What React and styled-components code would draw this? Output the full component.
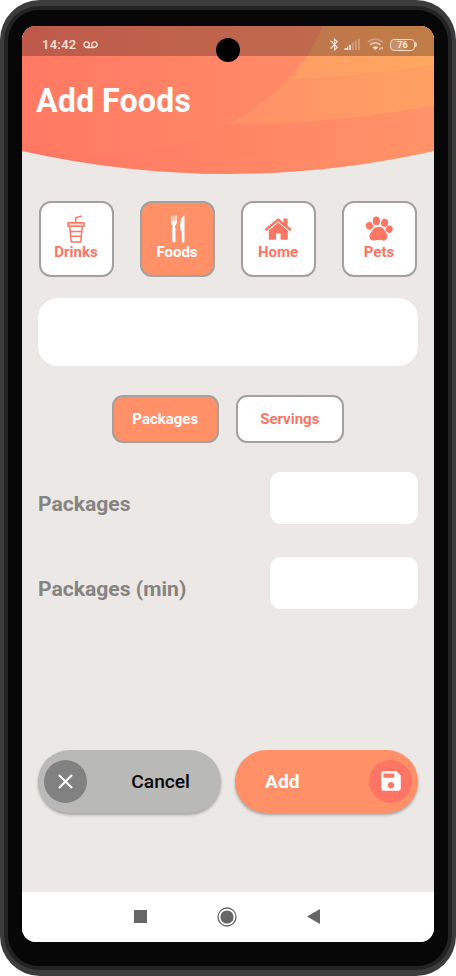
import React from "react";
import styled, { createGlobalStyle } from "styled-components";
import { MdSave, MdClose, MdBluetooth } from "react-icons/md";

const GlobalStyle = createGlobalStyle`
  * { box-sizing: border-box; }
  body { margin: 0; background: #fff; font-family: Roboto, sans-serif; }
  button, input { font-family: inherit; margin: 0; }
`;

const PhoneShell = styled.div`
  width: 456px;
  height: 976px;
  padding: 6px 4px;
  border-radius: 40px;
  background: #3c3c3c;
`;
const PhoneRim = styled.div`
  height: 100%;
  padding: 4px;
  border-radius: 35px;
  background: #232323;
`;
const PhoneBezel = styled.div`
  height: 100%;
  padding: 16px 14px 24px;
  border-radius: 31px;
  background: #070707;
`;
const Screen = styled.div`
  position: relative;
  display: flex;
  flex-direction: column;
  height: 916px;
  overflow: hidden;
  border-radius: 14px;
  background: #ece8e5;
`;
const Camera = styled.div`
  position: absolute;
  top: 12px;
  left: 194px;
  width: 24px;
  height: 24px;
  border-radius: 50%;
  background: #000;
`;
const Header = styled.header`
  position: relative;
  flex: none;
  height: 149px;
`;
const HeaderArt = styled.svg`
  position: absolute;
  inset: 0;
  display: block;
`;
const StatusBar = styled.div`
  position: relative;
  display: flex;
  align-items: center;
  justify-content: space-between;
  height: 30px;
  padding: 7px 17px 0 20px;
  background: rgba(0, 0, 0, 0.25);
`;
const StatusGroup = styled.div`
  display: flex;
  align-items: center;
  gap: ${(p) => p.$gap}px;
  color: #f3ddd3;
`;
const Clock = styled.span`
  font-size: 13px;
  font-weight: 600;
  line-height: 16px;
  letter-spacing: 0.25px;
`;
const Battery = styled.span`
  display: flex;
  align-items: center;
  &::after {
    content: "";
    width: 2px;
    height: 5px;
    border-radius: 0 2px 2px 0;
    background: #f0cdb2;
  }
`;
const BatteryLevel = styled.span`
  width: 25px;
  height: 12px;
  border: 1.8px solid #f3d9c6;
  border-radius: 4px;
  background: linear-gradient(90deg, #c99068 40%, transparent 76%);
  color: #fbeadd;
  font-size: 9px;
  font-weight: 700;
  line-height: 10px;
  text-align: center;
`;
const Title = styled.h1`
  position: relative;
  margin: 25px 0 0 14px;
  color: #fff;
  font-size: 32.3px;
  font-weight: 700;
  line-height: 40px;
`;
const Content = styled.main`
  display: flex;
  flex: 1;
  flex-direction: column;
  padding: 26px 16px 0;
`;
const CategoryRow = styled.div`
  display: flex;
  justify-content: space-between;
  padding: 0 1px 0 1px;
`;
const CategoryButton = styled.button`
  display: flex;
  flex-direction: column;
  align-items: center;
  width: 75px;
  height: 76px;
  padding: 11px 1px 0 0;
  border: 2px solid #a3a09d;
  border-radius: 12px;
  background: ${(p) => (p.$active ? "#ff9068" : "#fff")};
  color: ${(p) => (p.$active ? "#fff" : "#fd7563")};
  font-size: 15px;
  font-weight: 700;
  line-height: 18px;
`;
const CategoryIcon = styled.span`
  display: flex;
  align-items: center;
  justify-content: center;
  height: 29px;
`;
const NameInput = styled.input`
  height: 68px;
  margin-top: 21px;
  padding: 0 18px;
  border: 0;
  border-radius: 20px;
  background: #fff;
  font-size: 20px;
`;
const UnitRow = styled.div`
  display: flex;
  justify-content: center;
  gap: 17px;
  padding-right: 1px;
  margin-top: 29px;
`;
const UnitButton = styled.button`
  width: 107.5px;
  height: 47.5px;
  padding: 0;
  border: 2px solid #a3a09d;
  border-radius: 11px;
  background: ${(p) => (p.$active ? "#ff9068" : "#fff")};
  color: ${(p) => (p.$active ? "#fff" : "#f77566")};
  font-size: 15px;
  font-weight: 700;
`;
const FieldRow = styled.label`
  display: flex;
  align-items: flex-start;
  justify-content: space-between;
  margin-top: ${(p) => p.$top}px;
  color: #868482;
  font-size: 21.1px;
  font-weight: 700;
  line-height: 64px;
  height: 52px;
`;
const AmountInput = styled.input`
  width: 148px;
  height: 52px;
  padding: 0 14px;
  border: 0;
  border-radius: 11px;
  background: #fff;
  font-size: 18px;
`;
const ActionRow = styled.div`
  display: flex;
  justify-content: space-between;
  margin-top: 141px;
`;
const ActionButton = styled.button`
  display: flex;
  align-items: center;
  justify-content: space-between;
  width: 183px;
  height: 63px;
  padding: ${(p) => (p.$primary ? "0 6px 0 30px" : "0 31px 0 6px")};
  border: 0;
  border-radius: 32px;
  background: ${(p) => (p.$primary ? "#ff9068" : "#b9b9b8")};
  box-shadow: 0 2px 3px rgba(0, 0, 0, 0.3);
  color: ${(p) => (p.$primary ? "#fff" : "#050505")};
  font-size: ${(p) => (p.$primary ? 19.2 : 19.2)}px;
  font-weight: ${(p) => (p.$primary ? 700 : 500)};
`;
const ActionBadge = styled.span`
  display: flex;
  align-items: center;
  justify-content: center;
  width: 43px;
  height: 43px;
  border-radius: 50%;
  background: ${(p) => (p.$primary ? "#fe7563" : "#818181")};
  color: #fff;
`;
const NavBar = styled.nav`
  display: flex;
  flex: none;
  align-items: center;
  justify-content: center;
  gap: 70px;
  height: 50px;
  padding: 0 2px 1px 0;
  background: #fff;
`;

const VoicemailIcon = () => (
  <svg width="15" height="8" viewBox="0 0 15 8" fill="none" stroke="currentColor" strokeWidth="1.4">
    <circle cx="3.6" cy="3.6" r="2.7" />
    <circle cx="11.4" cy="3.6" r="2.7" />
    <path d="M3.6 6.5H11.4" />
  </svg>
);

const SignalIcon = () => (
  <svg width="17" height="13" viewBox="0 0 17 13" fill="currentColor">
    <rect x="0.5" y="10" width="3" height="2" />
    <rect x="3" y="8.6" width="1.3" height="3.4" />
    <rect x="5.2" y="6.8" width="1.8" height="5.2" />
    <g opacity="0.35">
      <rect x="8.1" y="4.4" width="1.7" height="7.6" />
      <rect x="11" y="2.6" width="1.8" height="9.4" />
      <rect x="14" y="0.8" width="1.8" height="11.2" />
    </g>
  </svg>
);

const WifiIcon = () => (
  <svg width="17" height="13" viewBox="0 0 17 13" fill="none" stroke="currentColor" strokeWidth="1.6">
    <path d="M0.8 4.2Q8.3 -2 15.8 4.2" opacity="0.4" />
    <path d="M3 7Q8.3 2.6 13.6 7" opacity="0.8" />
    <path d="M5.3 9.4Q8.3 7.2 11.3 9.4L8.3 12Z" fill="currentColor" stroke="none" />
    <path d="M13 12V10.4L15.5 9.6V11.4" strokeWidth="1.2" opacity="0.7" />
  </svg>
);

const DrinkIcon = () => (
  <svg width="18" height="28" viewBox="0 0 18 28" fill="none" stroke="currentColor" strokeWidth="1.5" strokeLinejoin="round">
    <path d="M8.7 7.5V2.7L15 0.9" />
    <path d="M1 7.7H17V11.3H1Z" fill="#f3dcd0" />
    <path d="M2.7 11.5L4.3 27H13.7L15.3 11.5M3.2 16.5H14.8M3.8 21.2H14.2" />
  </svg>
);

const CutleryIcon = () => (
  <svg width="18" height="28" viewBox="-2.5 0 18 28" fill="currentColor">
    <path d="M1.1 1V7.3M3.3 1V7.3M5.5 1V7.3" fill="none" stroke="currentColor" strokeWidth="1.3" strokeLinecap="round" />
    <path d="M0.5 6.5H6.2C6.2 9.2 5.3 10.2 4.5 10.7V12L5 13V26C5 28 1.8 28 1.8 26V13L2.3 12V10.7C1.3 10.2 0.5 9.2 0.5 6.5Z" />
    <path d="M14 0.6V26.2C14 28 11.3 28 11.3 26.2V16.5C10.2 16 9.7 14.5 9.7 12C9.7 6 11 1.5 14 0.6Z" />
  </svg>
);

const HomeIcon = () => (
  <svg width="28" height="22" viewBox="0 0 28 22" fill="currentColor">
    <path d="M2.3 11.5L14.2 1.8L26.1 11.5" fill="none" stroke="currentColor" strokeWidth="2.6" strokeLinecap="round" strokeLinejoin="round" />
    <path d="M19.5 0.6H23.6V8.4L19.5 5Z" />
    <path d="M4.8 12.4L14.2 4.6L23.8 12.4V21.8H16.6V15.4H12V21.8H4.8Z" />
  </svg>
);

const PawIcon = () => (
  <svg width="28" height="25" viewBox="0 0 28 25" fill="currentColor">
    <ellipse cx="4.4" cy="9.8" rx="3.5" ry="3.9" transform="rotate(-20 4.4 9.8)" />
    <ellipse cx="11.4" cy="4.9" rx="3.6" ry="4.4" />
    <ellipse cx="19.6" cy="6.8" rx="3.5" ry="4.1" transform="rotate(12 19.6 6.8)" />
    <ellipse cx="24.2" cy="13.2" rx="3.4" ry="3.7" transform="rotate(25 24.2 13.2)" />
    <path d="M13.6 10.8C18 10.8 19.4 14.2 21.4 17.2C24 21.2 21.4 25 17.8 24.4C14.8 23.9 12.6 23.8 9.6 24.4C5.4 25.2 3.1 21.8 5.2 18C7.2 14.8 9 10.8 13.6 10.8Z" />
  </svg>
);

const categories = [
  { label: "Drinks", icon: <DrinkIcon /> },
  { label: "Foods", icon: <CutleryIcon />, active: true },
  { label: "Home", icon: <HomeIcon /> },
  { label: "Pets", icon: <PawIcon /> },
];

export default function App() {
  return (
    <>
      <GlobalStyle />
      <PhoneShell>
        <PhoneRim>
          <PhoneBezel>
            <Screen>
              <Header>
                <HeaderArt width="412" height="149" viewBox="0 0 412 149">
                  <defs>
                    <linearGradient id="base" x1="0" x2="1">
                      <stop offset="0" stopColor="#ff7663" />
                      <stop offset="1" stopColor="#ff9368" />
                    </linearGradient>
                    <linearGradient id="disc" x1="0" x2="1">
                      <stop offset="0" stopColor="#ff7863" />
                      <stop offset="1" stopColor="#ff8d68" />
                    </linearGradient>
                    <linearGradient id="band" x1="0" x2="1">
                      <stop offset="0" stopColor="#ff9068" />
                      <stop offset="1" stopColor="#ffa063" />
                    </linearGradient>
                    <linearGradient id="glow" x1="0" x2="1">
                      <stop offset="0" stopColor="#ff9e66" />
                      <stop offset="1" stopColor="#ffa75e" />
                    </linearGradient>
                  </defs>
                  <path fill="url(#base)" d="M0 0H412V125Q206 171 0 125Z" />
                  <path fill="url(#disc)" d="M0 0H301Q272 64 206 98Q140 132 60 130L0 120Z" />
                  <path fill="url(#band)" d="M301 0Q272 64 206 98Q320 98 412 79V0Z" />
                  <path fill="url(#glow)" d="M301 0Q289 30 270 53Q345 50 412 39V0Z" />
                </HeaderArt>
                <StatusBar>
                  <StatusGroup $gap={6}>
                    <Clock>14:42</Clock>
                    <VoicemailIcon />
                  </StatusGroup>
                  <StatusGroup $gap={6}>
                    <StatusGroup $gap={2}>
                      <MdBluetooth size={15} />
                      <SignalIcon />
                    </StatusGroup>
                    <WifiIcon />
                    <Battery>
                      <BatteryLevel>76</BatteryLevel>
                    </Battery>
                  </StatusGroup>
                </StatusBar>
                <Title>Add Foods</Title>
              </Header>
              <Content>
                <CategoryRow>
                  {categories.map((c) => (
                    <CategoryButton key={c.label} $active={c.active}>
                      <CategoryIcon>{c.icon}</CategoryIcon>
                      {c.label}
                    </CategoryButton>
                  ))}
                </CategoryRow>
                <NameInput aria-label="Name" />
                <UnitRow>
                  <UnitButton $active>Packages</UnitButton>
                  <UnitButton>Servings</UnitButton>
                </UnitRow>
                <FieldRow $top={29.5}>
                  Packages
                  <AmountInput />
                </FieldRow>
                <FieldRow $top={32.5}>
                  Packages (min)
                  <AmountInput />
                </FieldRow>
                <ActionRow>
                  <ActionButton>
                    <ActionBadge>
                      <MdClose size={25} />
                    </ActionBadge>
                    Cancel
                  </ActionButton>
                  <ActionButton $primary>
                    Add
                    <ActionBadge $primary>
                      <MdSave size={26} />
                    </ActionBadge>
                  </ActionButton>
                </ActionRow>
              </Content>
              <NavBar>
                <svg width="13" height="13" viewBox="0 0 13 13">
                  <rect width="13" height="13" fill="#666" />
                </svg>
                <svg width="20" height="20" viewBox="0 0 20 20">
                  <circle cx="10" cy="10" r="9" fill="none" stroke="#666" strokeWidth="1.3" />
                  <circle cx="10" cy="10" r="6.6" fill="#666" />
                </svg>
                <svg width="13" height="15" viewBox="0 0 13 15">
                  <path d="M0 7.5L13 0V15Z" fill="#666" />
                </svg>
              </NavBar>
              <Camera />
            </Screen>
          </PhoneBezel>
        </PhoneRim>
      </PhoneShell>
    </>
  );
}
